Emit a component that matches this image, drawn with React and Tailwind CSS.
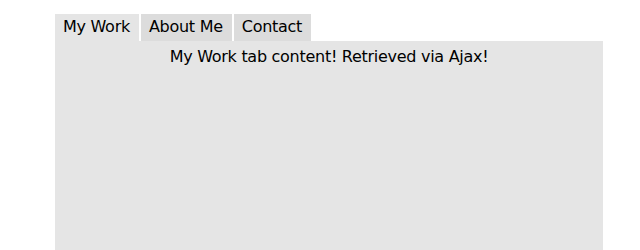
import React, { useState } from 'react'

const App = () => {
  const tabs = [
    { id: 'work', title: 'My Work' },
    { id: 'about', title: 'About Me' },
    { id: 'contact', title: 'Contact' },
  ]
  const [active, setActive] = useState('work')

  return (
    <div className="bg-white h-[250px] pl-[55px] pt-[14px] w-[603px] overflow-hidden tracking-[-0.28px]" style={{ fontFamily: '"DejaVu Sans", sans-serif' }}>
      <ul className="flex gap-[2px]">
        {tabs.map((tab) => (
          <li
            key={tab.id}
            onClick={() => setActive(tab.id)}
            className={
              'h-[27px] pl-[8px] pr-[9px] pt-[3px] text-[16px] leading-[20px] text-black cursor-pointer ' +
              (active === tab.id ? 'bg-[#e5e5e5]' : 'bg-[#dcdcdc]')
            }
          >
            {tab.title}
          </li>
        ))}
      </ul>
      <div className="bg-[#e5e5e5] h-[220px] pt-[6px] text-center text-[16px] leading-[20px] text-black">
        My Work tab content! Retrieved via Ajax!
      </div>
    </div>
  )
}

export default App
